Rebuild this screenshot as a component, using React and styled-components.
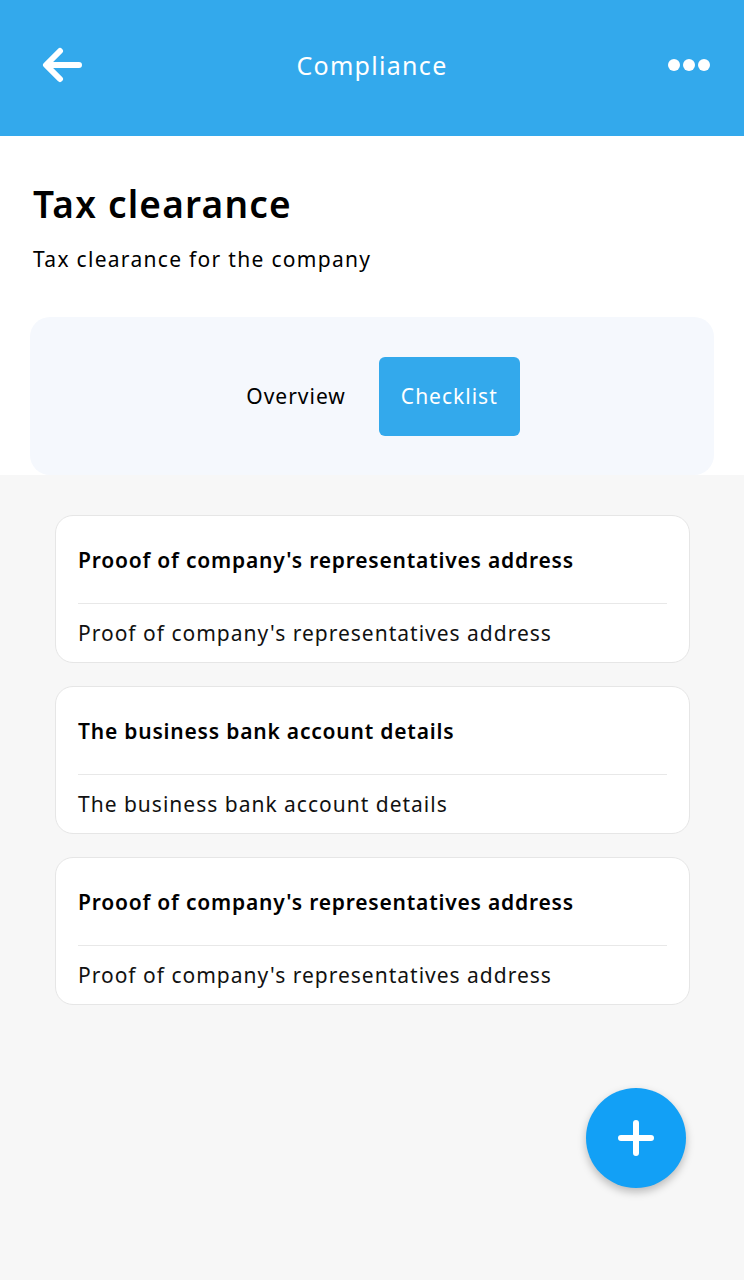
import React from 'react';
import styled, { createGlobalStyle } from 'styled-components';

const GlobalStyle = createGlobalStyle`
  html, body {
    margin: 0;
    padding: 0;
    background: #f7f7f7;
    font-family: "Noto Sans", "Open Sans", sans-serif;
  }
`;

const Page = styled.div`
  width: 744px;
  min-height: 1280px;
  display: flex;
  flex-direction: column;
  background: #f7f7f7;
  position: relative;
`;

const Header = styled.header`
  height: 136px;
  box-sizing: border-box;
  padding-bottom: 6px;
  background: #33a9ec;
  display: grid;
  grid-template-columns: 120px 1fr 120px;
  align-items: center;
  color: #fff;
`;

const IconButton = styled.button`
  border: none;
  background: none;
  padding: 0;
  display: flex;
  align-items: center;
  justify-content: ${(p) => (p.$right ? 'flex-end' : 'flex-start')};
  padding-left: ${(p) => (p.$right ? '0' : '42px')};
  padding-right: ${(p) => (p.$right ? '34px' : '0')};
  color: #fff;
`;

const HeaderTitle = styled.h1`
  margin: 0;
  text-align: center;
  font-size: 25px;
  font-weight: 400;
  letter-spacing: 1.3px;
`;

const Intro = styled.section`
  background: #fff;
  padding: 46px 30px 0;
`;

const Title = styled.h2`
  margin: 0 0 0 3px;
  font-size: 37px;
  font-weight: 600;
  color: #000;
  line-height: 44px;
  letter-spacing: 1.2px;
`;

const Subtitle = styled.p`
  margin: 19px 0 0 3px;
  font-size: 21px;
  color: #000;
  line-height: 28px;
  letter-spacing: 1.3px;
`;

const Tabs = styled.div`
  margin-top: 44px;
  height: 158px;
  background: #f5f8fd;
  border-radius: 20px;
  display: flex;
  align-items: center;
  justify-content: center;
  padding-right: 11px;
`;

const Tab = styled.button`
  border: none;
  font-family: inherit;
  font-size: 21px;
  letter-spacing: 1px;
  height: 79px;
  padding: 0 ${(p) => (p.$active ? '22px' : '33px')};
  border-radius: 6px;
  background: ${(p) => (p.$active ? '#33a9ec' : 'transparent')};
  color: ${(p) => (p.$active ? '#fff' : '#000')};
`;

const List = styled.main`
  padding: 40px 54px 0 55px;
  display: flex;
  flex-direction: column;
  gap: 23px;
`;

const Card = styled.article`
  background: #fff;
  border: 1px solid #e6e6e6;
  border-radius: 18px;
  padding: 0 22px;
`;

const CardTitle = styled.h3`
  margin: 0;
  height: 87px;
  display: flex;
  align-items: center;
  font-size: 21px;
  font-weight: 600;
  letter-spacing: 0.8px;
  color: #000;
  border-bottom: 1px solid #e8e8e8;
`;

const CardBody = styled.p`
  margin: 0;
  height: 58px;
  display: flex;
  align-items: center;
  font-size: 21px;
  letter-spacing: 1px;
  color: #111;
`;

const Fab = styled.button`
  position: absolute;
  left: 586px;
  top: 1088px;
  width: 100px;
  height: 100px;
  border-radius: 50%;
  border: none;
  background: #12a0f6;
  box-shadow: 0 4px 8px rgba(0, 0, 0, 0.25);
  display: flex;
  align-items: center;
  justify-content: center;
`;

const items = [
  { title: "Prooof of company's representatives address", body: "Proof of company's representatives address" },
  { title: 'The business bank account details', body: 'The business bank account details' },
  { title: "Prooof of company's representatives address", body: "Proof of company's representatives address" },
];

const App = () => (
  <Page>
    <GlobalStyle />
    <Header>
      <IconButton aria-label="Back">
        <svg width="40" height="36" viewBox="0 0 40 36" fill="none">
          <path d="M37 18H5M18 4L4 18l14 14" stroke="#fff" strokeWidth="6" strokeLinecap="round" strokeLinejoin="round" />
        </svg>
      </IconButton>
      <HeaderTitle>Compliance</HeaderTitle>
      <IconButton $right aria-label="More">
        <svg width="42" height="14" viewBox="0 0 42 14">
          <circle cx="6" cy="7" r="6" fill="#fff" />
          <circle cx="21" cy="7" r="6" fill="#fff" />
          <circle cx="36" cy="7" r="6" fill="#fff" />
        </svg>
      </IconButton>
    </Header>
    <Intro>
      <Title>Tax clearance</Title>
      <Subtitle>Tax clearance for the company</Subtitle>
      <Tabs>
        <Tab>Overview</Tab>
        <Tab $active>Checklist</Tab>
      </Tabs>
    </Intro>
    <List>
      {items.map((item, i) => (
        <Card key={i}>
          <CardTitle>{item.title}</CardTitle>
          <CardBody>{item.body}</CardBody>
        </Card>
      ))}
    </List>
    <Fab aria-label="Add">
      <svg width="40" height="40" viewBox="0 0 40 40">
        <path d="M20 5v30M5 20h30" stroke="#fff" strokeWidth="6" strokeLinecap="round" />
      </svg>
    </Fab>
  </Page>
);

export default App;
